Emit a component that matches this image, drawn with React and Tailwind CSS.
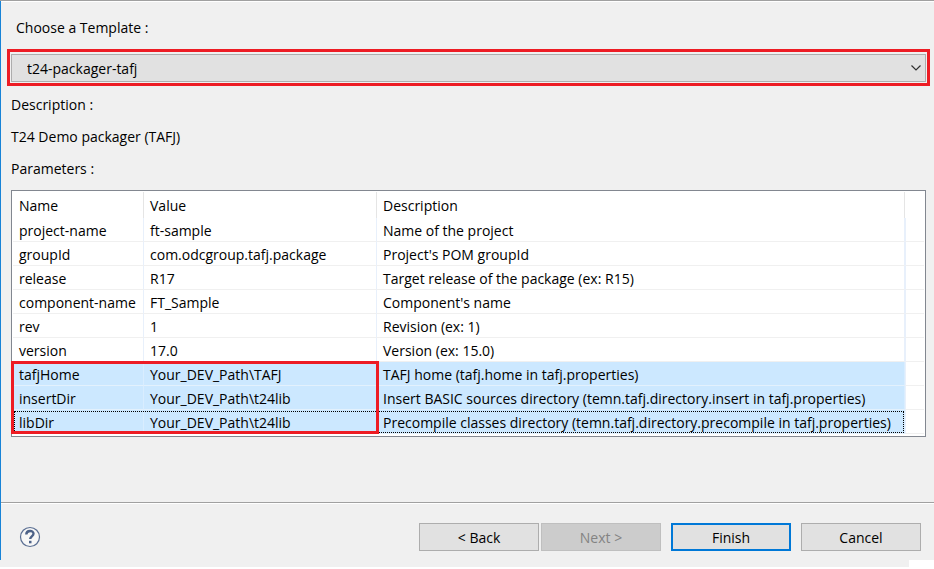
import React from "react";

const rows = [
  ["project-name", "ft-sample", "Name of the project"],
  ["groupId", "com.odcgroup.tafj.package", "Project's POM groupId"],
  ["release", "R17", "Target release of the package (ex: R15)"],
  ["component-name", "FT_Sample", "Component's name"],
  ["rev", "1", "Revision (ex: 1)"],
  ["version", "17.0", "Version (ex: 15.0)"],
  ["tafjHome", "Your_DEV_Path\\TAFJ", "TAFJ home (tafj.home in tafj.properties)"],
  ["insertDir", "Your_DEV_Path\\t24lib", "Insert BASIC sources directory (temn.tafj.directory.insert in tafj.properties)"],
  ["libDir", "Your_DEV_Path\\t24lib", "Precompile classes directory (temn.tafj.directory.precompile in tafj.properties)"],
];

function ParameterTable() {
  return (
    <div className="relative mr-2 ml-[11px] border border-[#828790] bg-white px-px pt-px pb-0.5">
      <table aria-labelledby="parameters" className="w-full table-fixed border-separate border-spacing-0 text-left whitespace-nowrap">
        <colgroup>
          <col className="w-[131px]" />
          <col className="w-[233px]" />
          <col />
          <col className="w-[19px]" />
        </colgroup>
        <thead>
          <tr className="h-[26px]">
            {["Name", "Value", "Description"].map((h) => (
              <th key={h} className="border-r border-[#e5e5e5] p-0 pt-0.5 pl-1.5 font-normal">{h}</th>
            ))}
            <td className="p-0" />
          </tr>
        </thead>
        <tbody>
          {rows.map((row, i) => (
            <tr key={row[0]} className="h-6">
              {row.map((cell, c) => (
                <td
                  key={c}
                  className={
                    i > 5
                      ? "border-r border-b border-r-[#d9edff] border-b-[#e3f1fd] bg-[#cce8ff] p-0 pt-0.5 pl-1.5"
                      : "border-r border-b border-r-[#e8f0fb] border-b-[#f0f0f0] p-0 pt-0.5 pl-1.5"
                  }
                >
                  {cell}
                </td>
              ))}
              <td className="border-b border-l border-b-[#f0f0f0] border-l-[#e8f0fb] p-0" />
            </tr>
          ))}
        </tbody>
      </table>
      <div className="pointer-events-none absolute right-[21px] bottom-[3px] left-0.5 h-[22px] border border-dotted border-black" />
      <div className="pointer-events-none absolute bottom-0.5 -left-px h-[73px] w-[368px] border-3 border-[#ed1c24]" />
    </div>
  );
}

const button = "h-7 w-30 border border-[#adadad] bg-[#e1e1e1] pt-0.5";

export default function App() {
  return (
    <main className="bg-[#f0f0f0] font-['Open_Sans','Noto_Sans',sans-serif] text-sm leading-5 text-black">
      <div className="border-t border-[#a0a0a0] shadow-[inset_0_1px_0_white]">
        <div className="border-l border-[#1883d7]">
          <div className="-ml-px pt-[17px]">
            <label htmlFor="template" className="ml-4 block">Choose a Template :</label>
            <div className="relative mt-[11px] mr-1 ml-[7px] border-3 border-[#ed1c24] p-px pt-0.5">
              <select id="template" className="block h-7 w-full appearance-none border border-[#adadad] bg-[#e1e1e1] pt-0.5 pl-[15px]">
                <option>t24-packager-tafj</option>
              </select>
              <svg className="pointer-events-none absolute top-3 right-[5px] h-2 w-3" viewBox="0 0 12 8" fill="none" stroke="#303030">
                <path d="M1.5 1.500 6 6l4.500-4.500" strokeWidth="1.2" />
              </svg>
            </div>
            <div className="mt-[9px] ml-[11px] space-y-3">
              <p>Description :</p>
              <p>T24 Demo packager (TAFJ)</p>
              <p id="parameters">Parameters :</p>
            </div>
            <div className="mt-[11px]">
              <ParameterTable />
            </div>
          </div>
          <footer className="mt-[65px] flex items-center border-t border-[#a0a0a0] pt-5 pr-[13px] pb-[9px] pl-[18px] shadow-[inset_0_1px_0_white]">
            <button aria-label="Help" className="mr-auto">
              <svg className="size-[22px]" viewBox="0 0 22 22" fill="none">
                <circle cx="11" cy="11" r="9.500" fill="#f7f7f7" stroke="#5b6f93" strokeWidth="1.200" />
                <path d="M7.300 8.500C7.300 3.800 14.700 4 14.500 7.800c-.1 2.500-3.200 2.700-3.300 5.200" stroke="#4d6288" strokeWidth="2.400" />
                <path d="M10 14.800h2.500v2.500H10z" fill="#4d6288" />
              </svg>
            </button>
            <button className={button}>&lt; Back</button>
            <button disabled className="ml-0.5 h-7 w-30 border border-[#bfbfbf] bg-[#cccccc] pt-0.5 text-[#838383]">Next &gt;</button>
            <button className="mx-2.5 h-7 w-30 border-2 border-[#0078d7] bg-[#e1e1e1] pt-0.5">Finish</button>
            <button className={button}>Cancel</button>
          </footer>
        </div>
      </div>
      <div className="flex h-[7px] justify-end">
        <div className="w-[25px] bg-white" />
      </div>
    </main>
  );
}
